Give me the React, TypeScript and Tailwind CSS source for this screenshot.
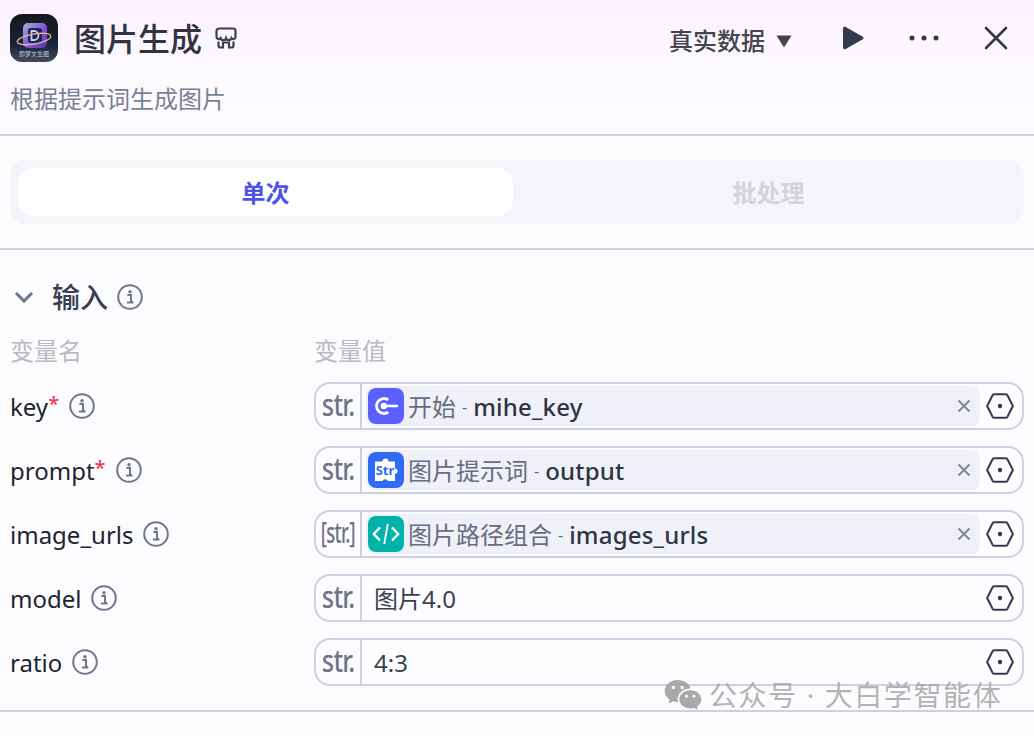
import type { ReactNode } from 'react';
import { RiWechatFill } from 'react-icons/ri';

const font = { fontFamily: '"Noto Sans", "Noto Sans CJK SC", sans-serif' };

function InfoIcon() {
  return (
    <svg width="26" height="26" viewBox="0 0 26 26" fill="none" className="shrink-0">
      <circle cx="13" cy="13" r="11.800" stroke="#6f768e" strokeWidth="2" />
      <circle cx="13" cy="7.800" r="1.700" fill="#6f768e" />
      <path d="M10.400 11h3.600v7h2M10 18.400h6.400" stroke="#6f768e" strokeWidth="2" />
    </svg>
  );
}

function HexIcon() {
  return (
    <svg width="28" height="26" viewBox="0 0 28 26" fill="none" className="shrink-0">
      <path d="M8 1.200h12a1.500 1.500 0 0 1 1.300.8l5.200 10.200a1.600 1.600 0 0 1 0 1.600L21.300 24a1.500 1.500 0 0 1-1.300.8H8a1.500 1.500 0 0 1-1.300-.8L1.500 13.800a1.600 1.600 0 0 1 0-1.600L6.700 2a1.500 1.500 0 0 1 1.300-.8z" stroke="#353a4f" strokeWidth="2" />
      <circle cx="14" cy="13" r="2.200" fill="#353a4f" />
    </svg>
  );
}

function StartIcon() {
  return (
    <div className="flex h-9 w-9 shrink-0 items-center justify-center rounded-lg bg-[#5a60ff]">
      <svg width="24" height="20" viewBox="0 0 24 20" fill="none">
        <path d="M14.300 3.800A7.500 7.500 0 1 0 14.300 16.200" stroke="white" strokeWidth="2.800" />
        <circle cx="9.800" cy="10" r="3.200" fill="white" />
        <path d="M11 10h12" stroke="white" strokeWidth="2.400" strokeLinecap="round" />
      </svg>
    </div>
  );
}

function PluginIcon() {
  return (
    <div className="flex h-9 w-9 shrink-0 items-center justify-center rounded-lg bg-[#2f6bf6]">
      <svg width="26" height="26" viewBox="0 0 26 26">
        <path d="M2 4.500h7.500a3 3 0 0 1 6 0H22v7a2.600 2.600 0 0 1 0 5.200V24H15a3 3 0 0 0-5.500 0H2z" fill="white" />
        <text x="12" y="17.800" textAnchor="middle" fontSize="13" fontWeight="700" fill="#2f6bf6" fontFamily="Noto Sans">Str</text>
      </svg>
    </div>
  );
}

function CodeIcon() {
  return (
    <div className="flex h-9 w-9 shrink-0 items-center justify-center rounded-lg bg-[#00b2aa]">
      <svg width="28" height="24" viewBox="0 0 28 24" fill="none" stroke="white" strokeWidth="2.400">
        <path d="M8 5.500 1.800 12 8 18.500M20 5.500 26.200 12 20 18.500" />
        <path d="M15.800 2 12.200 22" strokeWidth="1.800" />
      </svg>
    </div>
  );
}

function AppLogo() {
  return (
    <svg width="48" height="48" viewBox="0 0 48 48" className="shrink-0 rounded-xl">
      <defs>
        <linearGradient id="logoBg" x1="0" y1="0" x2="0" y2="1">
          <stop offset="0" stopColor="#16181e" />
          <stop offset="0.65" stopColor="#18243a" />
          <stop offset="1" stopColor="#434a5c" />
        </linearGradient>
        <linearGradient id="logoCard" x1="0" y1="0" x2="1" y2="1">
          <stop offset="0" stopColor="#9fb2dd" />
          <stop offset="0.55" stopColor="#8052d6" />
          <stop offset="1" stopColor="#5a36b0" />
        </linearGradient>
      </defs>
      <rect width="48" height="48" fill="url(#logoBg)" />
      <rect x="13" y="9" width="24" height="25" rx="5" fill="url(#logoCard)" />
      <rect x="18" y="14" width="14" height="15" rx="3" fill="#23214f" />
      <path d="M21.500 17v9h2.500a4.500 4.500 0 0 0 0-9z" fill="none" stroke="#c6cff5" strokeWidth="1.800" />
      <ellipse cx="24" cy="25" rx="17" ry="5" fill="none" stroke="#d9b98a" strokeWidth="1.300" transform="rotate(-10 24 25)" />
      <text x="24" y="42" textAnchor="middle" fontSize="6" fill="#c6c9d2" fontFamily="Noto Sans CJK SC">即梦文生图</text>
    </svg>
  );
}

function TypeLabel({ text }: { text: string }) {
  return (
    <div className="flex h-full w-[46px] shrink-0 items-center justify-center border-r-2 border-[#cdd0e2] text-[#6f7388]">
      {text === '[str.]' ? (
        <span className="mb-1 scale-x-[0.66] text-[28px] font-medium leading-none tracking-[-1px]">{text}</span>
      ) : (
        <span className="mb-[2px] scale-x-[0.85] text-[30px] font-medium leading-none tracking-[-1px]">{text}</span>
      )}
    </div>
  );
}

interface Row {
  name: string;
  required?: boolean;
  type: string;
  icon?: ReactNode;
  source?: string;
  field?: string;
  value?: string;
}

const rows: Row[] = [
  { name: 'key', required: true, type: 'str.', icon: <StartIcon />, source: '开始', field: 'mihe_key' },
  { name: 'prompt', required: true, type: 'str.', icon: <PluginIcon />, source: '图片提示词', field: 'output' },
  { name: 'image_urls', type: '[str.]', icon: <CodeIcon />, source: '图片路径组合', field: 'images_urls' },
  { name: 'model', type: 'str.', value: '图片4.0' },
  { name: 'ratio', type: 'str.', value: '4:3' },
];

function InputRow({ row }: { row: Row }) {
  return (
    <div className="flex h-12 items-center">
      <div className="flex w-[304px] shrink-0 items-center gap-[10px] text-[24px] text-[#20242f]">
        <span className="mt-[1px] flex items-start">
          {row.name}
          {row.required ? <span className="text-[20px] font-medium leading-[30px] text-[#f2374f]">*</span> : null}
        </span>
        <InfoIcon />
      </div>
      <div className="flex h-12 w-[710px] items-center rounded-[16px] border-2 border-[#cdd0e2] bg-[#fdfdff]">
        <TypeLabel text={row.type} />
        {row.icon ? (
          <div className="ml-1 flex h-10 w-[614px] items-center rounded-lg bg-[#f0f1f8] pl-[2px]">
            {row.icon}
            <span className="ml-1 mt-[1px] text-[24px] text-[#676c80]">{row.source}</span>
            <span className="mx-[6px] mt-[1px] text-[16px] text-[#676c80]">-</span>
            <span className="mt-[1px] text-[24px] font-medium tracking-[0.2px] text-[#2e3345]">{row.field}</span>
            <svg width="14" height="14" viewBox="0 0 14 14" className="ml-auto mr-[9px]" stroke="#85889a" strokeWidth="2">
              <path d="M1.500 1.500 12.500 12.500M12.500 1.500 1.500 12.500" />
            </svg>
          </div>
        ) : (
          <span className="ml-3 mt-[2px] flex-1 text-[24px] text-[#3a3f52]">{row.value}</span>
        )}
        <div className={row.icon ? 'ml-[6px]' : 'mr-[8px]'}>
          <HexIcon />
        </div>
      </div>
    </div>
  );
}

export default function App() {
  return (
    <div style={font} className="relative h-[736px] w-[1034px] overflow-hidden bg-[linear-gradient(180deg,#fbf1fe_0px,#fcf8ff_60px,#fcfcff_130px)]">
      <header className="h-[136px] border-b-2 border-[#cdd0e2] pl-[10px] pr-[26px] pt-[14px]">
        <div className="flex h-12 items-center">
          <AppLogo />
          <h1 className="ml-[16px] mt-[2px] text-[32px] font-medium text-[#33333f]">图片生成</h1>
          <svg width="22" height="22" viewBox="0 0 22 22" fill="none" stroke="#3a3d4d" strokeWidth="2.200" className="ml-[13px]">
            <path d="M4 1.500h14A2.500 2.500 0 0 1 20.500 4v6a2.200 2.200 0 0 1-4 1.200 2.900 2.900 0 0 1-5.500 0 2.900 2.900 0 0 1-5.500 0 2.200 2.200 0 0 1-4-1.200V4A2.500 2.500 0 0 1 4 1.500z" />
            <path d="M3.500 14.500v4a2 2 0 0 0 2 2H8v-5h6v5h2.500a2 2 0 0 0 2-2v-4" />
          </svg>
          <span className="ml-auto mt-[5px] text-[24px] font-medium text-[#44444c]">真实数据</span>
          <svg width="16" height="13" viewBox="0 0 16 13" className="ml-[11px] mt-[7px]">
            <path d="M0.500 0.500h15L8 12.500z" fill="#44444c" />
          </svg>
          <svg width="22" height="24" viewBox="0 0 22 24" className="ml-[50px]">
            <path d="M1 2.500C1 1 2.300 0.300 3.600 1L20.500 10.500c1.400.8 1.400 2.200 0 3L3.600 23C2.300 23.700 1 23 1 21.500z" fill="#333a50" />
          </svg>
          <svg width="32" height="8" viewBox="0 0 32 8" className="ml-[44px]" fill="#333a50">
            <circle cx="4" cy="4" r="2.500" />
            <circle cx="16" cy="4" r="2.500" />
            <circle cx="28" cy="4" r="2.500" />
          </svg>
          <svg width="24" height="24" viewBox="0 0 24 24" className="ml-[44px] shrink-0" stroke="#333a50" strokeWidth="2.600" strokeLinecap="round">
            <path d="M2 2 22 22M22 2 2 22" />
          </svg>
        </div>
        <p className="mt-[19px] text-[24px] leading-[36px] text-[#7b7f92]">根据提示词生成图片</p>
      </header>

      <div className="h-[114px] border-b-2 border-[#cdd0e2] px-[10px] pt-[24px]">
        <div className="flex h-16 rounded-[16px] bg-[#f4f5f8] py-2 pl-2">
          <div className="flex w-[495px] items-center justify-center rounded-[16px] bg-white pt-[2px] text-[24px] font-bold text-[#4d53e8]">单次</div>
          <div className="flex flex-1 items-center justify-center pt-[2px] text-[24px] font-bold text-[#d3d4d9]">批处理</div>
        </div>
      </div>

      <section className="h-[462px] border-b-2 border-[#cdd0e2] px-[10px] pt-[28px]">
        <div className="flex h-[38px] items-center">
          <svg width="20" height="12" viewBox="0 0 20 12" fill="none" stroke="#6f768e" strokeWidth="3" className="ml-[4px]">
            <path d="M2 2 10 10 18 2" />
          </svg>
          <span className="ml-[18px] text-[28px] font-medium text-[#383d50]">输入</span>
          <span className="ml-[9px]">
            <InfoIcon />
          </span>
        </div>
        <div className="mt-[17px] flex h-[36px] items-center text-[24px] text-[#b9babf]">
          <span className="w-[304px]">变量名</span>
          <span>变量值</span>
        </div>
        <div className="mt-[13px] flex flex-col gap-4">
          {rows.map((row) => (
            <InputRow key={row.name} row={row} />
          ))}
        </div>
      </section>

      <div className="absolute left-[663px] top-[674px] flex items-center gap-[6px] text-[28px] text-[#a9a9ab]/90">
        <RiWechatFill size={40} color="#a9a9ab" />
        <span className="tracking-[1.600px]">公众号 · 大白学智能体</span>
      </div>
    </div>
  );
}
